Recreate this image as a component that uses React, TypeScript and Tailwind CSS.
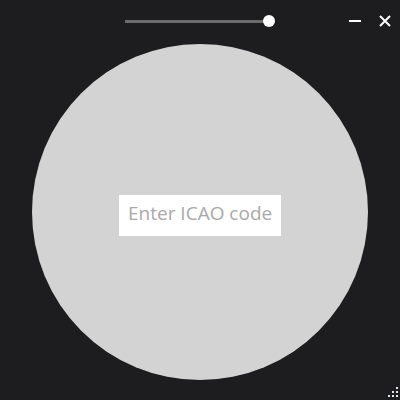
const App = () => {
  return (
    <div className="relative flex h-[400px] w-[400px] flex-col bg-[#1d1d1f]">
      <div className="flex h-[42px] items-center pl-[125px] pr-[9px]">
        <div className="relative flex h-[12px] w-[150px] items-center">
          <div className="h-[3px] w-[144px] bg-[#6b6b6b]" />
          <div className="absolute left-[138px] top-0 h-[12px] w-[12px] rounded-full bg-white" />
        </div>
        <div className="ml-auto flex items-center gap-[18px]">
          <div className="h-[2px] w-[12px] bg-white" />
          <svg width="12" height="12" viewBox="0 0 12 12">
            <path d="M1 1L11 11M11 1L1 11" stroke="white" strokeWidth="2" />
          </svg>
        </div>
      </div>
      <div className="mx-auto mt-[2px] flex h-[336px] w-[336px] items-center justify-center rounded-full bg-[#d3d3d3]">
        <input
          type="text"
          placeholder="Enter ICAO code"
          className="mt-[7px] h-[41px] w-[162px] bg-white px-[9px] pb-[5px] text-[19px] text-[#333] outline-none placeholder:text-[#a9a9a9]"
          style={{ fontFamily: '"Open Sans", "Noto Sans", sans-serif' }}
        />
      </div>
      <div className="absolute bottom-[3px] right-[2px] grid grid-cols-3 gap-[2px]">
        <div className="h-[2px] w-[2px]" />
        <div className="h-[2px] w-[2px]" />
        <div className="h-[2px] w-[2px] bg-[#dfe6f2]" />
        <div className="h-[2px] w-[2px]" />
        <div className="h-[2px] w-[2px] bg-[#dfe6f2]" />
        <div className="h-[2px] w-[2px] bg-[#dfe6f2]" />
        <div className="h-[2px] w-[2px] bg-[#dfe6f2]" />
        <div className="h-[2px] w-[2px] bg-[#dfe6f2]" />
        <div className="h-[2px] w-[2px] bg-[#dfe6f2]" />
      </div>
    </div>
  );
};

export default App;
